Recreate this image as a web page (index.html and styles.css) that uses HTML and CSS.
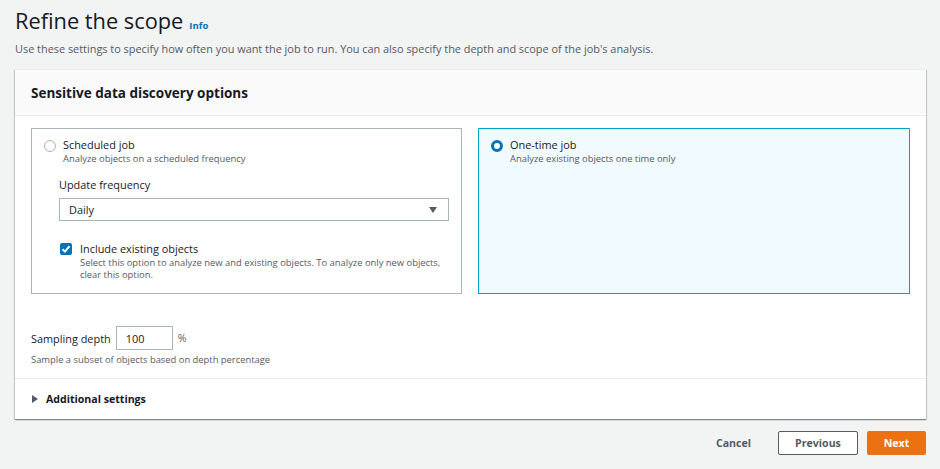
FILE: index.html
```html
<!DOCTYPE html>
<html>
<head>
<meta charset="utf-8">
<link rel="stylesheet" href="styles.css">
</head>
<body>
<div class="page">
  <div class="head">
    <h1 class="title">Refine the scope</h1>
    <a class="info">Info</a>
  </div>
  <p class="lead">Use these settings to specify how often you want the job to run. You can also specify the depth and scope of the job's analysis.</p>

  <div class="card">
    <div class="card-head">Sensitive data discovery options</div>
    <div class="card-body">
      <div class="tiles">
        <div class="tile">
          <div class="opt">
            <span class="radio"></span>
            <div>
              <div class="opt-label">Scheduled job</div>
              <div class="opt-desc">Analyze objects on a scheduled frequency</div>
            </div>
          </div>
          <div class="field">
            <div class="field-label">Update frequency</div>
            <div class="select"><span>Daily</span><span class="caret"></span></div>
          </div>
          <div class="check-row">
            <span class="check"><svg width="12" height="12" viewBox="0 0 12 12"><path d="M2.5 6.2 L5 8.6 L9.5 3.2" fill="none" stroke="#fff" stroke-width="2"/></svg></span>
            <div>
              <div class="opt-label">Include existing objects</div>
              <div class="opt-desc">Select this option to analyze new and existing objects. To analyze only new objects, clear this option.</div>
            </div>
          </div>
        </div>
        <div class="tile selected">
          <div class="opt">
            <span class="radio on"></span>
            <div>
              <div class="opt-label">One-time job</div>
              <div class="opt-desc">Analyze existing objects one time only</div>
            </div>
          </div>
        </div>
      </div>

      <div class="depth">
        <div class="depth-row">
          <span class="depth-label">Sampling depth</span>
          <span class="input">100</span>
          <span class="pct">%</span>
        </div>
        <div class="opt-desc">Sample a subset of objects based on depth percentage</div>
      </div>
    </div>
    <div class="expander"><span class="tri"></span>Additional settings</div>
  </div>

  <div class="actions">
    <span class="btn link">Cancel</span>
    <span class="btn normal">Previous</span>
    <span class="btn primary">Next</span>
  </div>
</div>
</body>
</html>
```

FILE: styles.css
```css
* { box-sizing: border-box; }
html, body { margin: 0; padding: 0; }
body {
  background: #f2f3f3;
  font-family: "Open Sans", "Noto Sans", sans-serif;
  color: #16191f;
  width: 940px;
  height: 469px;
  overflow: hidden;
}
.page { padding: 5px 14px 0 15px; }
.head { display: flex; align-items: baseline; gap: 6px; }
.title {
  margin: 0;
  font-weight: 400;
  font-size: 21.8px;
  line-height: 32px;
  color: #16191f;
}
.info { font-size: 9.5px; font-weight: 700; color: #0073bb; }
.lead {
  margin: 3px 0 0;
  font-size: 10.9px;
  line-height: 18px;
  color: #545b64;
}
.card {
  margin-top: 11px;
  background: #fff;
  box-shadow: 0 1px 1px 0 rgba(0,28,36,.3), 1px 1px 1px 0 rgba(0,28,36,.15), -1px 1px 1px 0 rgba(0,28,36,.15);
  border-top: 1px solid #eaeded;
}
.card-head {
  background: #fafafa;
  border-bottom: 1px solid #eaeded;
  height: 46px;
  padding: 0 16px;
  display: flex;
  align-items: center;
  font-size: 13.5px;
  font-weight: 700;
}
.card-body { padding: 12px 16px 12px 16px; border-bottom: 1px solid #eaeded; }
.tiles { display: grid; grid-template-columns: 431px 432px; gap: 16px; }
.tile {
  border: 1px solid #aab7b8;
  height: 166px;
  padding: 9px 12px;
}
.tile.selected { border-color: #00a1c9; background: #f1faff; }
.opt { display: flex; gap: 7px; align-items: flex-start; }
.radio {
  width: 12px; height: 12px; border-radius: 50%;
  border: 1px solid #aab7b8; background: #fff;
  margin-top: 2px; flex: none;
}
.radio.on { border: 3.5px solid #0073bb; }
.opt-label { font-size: 10.9px; line-height: 14px; color: #16191f; }
.opt-desc { font-size: 9.4px; line-height: 12px; color: #545b64; margin-top: 1px; }
.field { margin: 12px 0 0 15px; }
.field-label { font-size: 10.9px; line-height: 16px; }
.select {
  margin-top: 5px;
  height: 23px;
  border: 1px solid #aab7b8;
  display: flex;
  align-items: center;
  justify-content: space-between;
  padding: 0 11px 0 9px;
  font-size: 10.9px;
}
.caret {
  width: 0; height: 0;
  border-left: 4.5px solid transparent;
  border-right: 4.5px solid transparent;
  border-top: 6px solid #545b64;
}
.check-row { display: flex; gap: 8px; margin: 21px 0 0 16px; align-items: flex-start; }
.check {
  width: 12px; height: 12px; background: #0073bb; border-radius: 2px;
  display: flex; align-items: center; justify-content: center; flex: none;
  margin-top: 1px;
}
.check-row .opt-desc { width: 380px; }
.depth { margin-top: 32px; }
.depth-row { display: flex; align-items: center; gap: 5px; }
.depth-label { font-size: 10.9px; }
.input {
  width: 57px; height: 24px; border: 1px solid #aab7b8;
  padding: 0 9px; font-size: 10.9px; display: flex; align-items: center;
}
.pct { font-size: 10.5px; color: #545b64; }
.depth .opt-desc { margin-top: 4px; }
.expander {
  height: 40px;
  display: flex; align-items: center; gap: 8px;
  padding-left: 17px;
  font-size: 10.6px; font-weight: 700; color: #16191f;
}
.tri {
  width: 0; height: 0;
  border-top: 4.5px solid transparent;
  border-bottom: 4.5px solid transparent;
  border-left: 6px solid #545b64;
}
.actions { display: flex; justify-content: flex-end; align-items: center; gap: 9px; margin-top: 12px; }
.btn {
  height: 24px; display: flex; align-items: center; justify-content: center;
  font-size: 10.6px; font-weight: 700; padding: 0 10px; border-radius: 2px;
}
.btn.link { color: #545b64; margin-right: 8px; }
.btn.normal { border: 1px solid #545b64; color: #545b64; background: #fff; width: 80px; }
.btn.primary { background: #ec7211; color: #fff; width: 59px; }
```
